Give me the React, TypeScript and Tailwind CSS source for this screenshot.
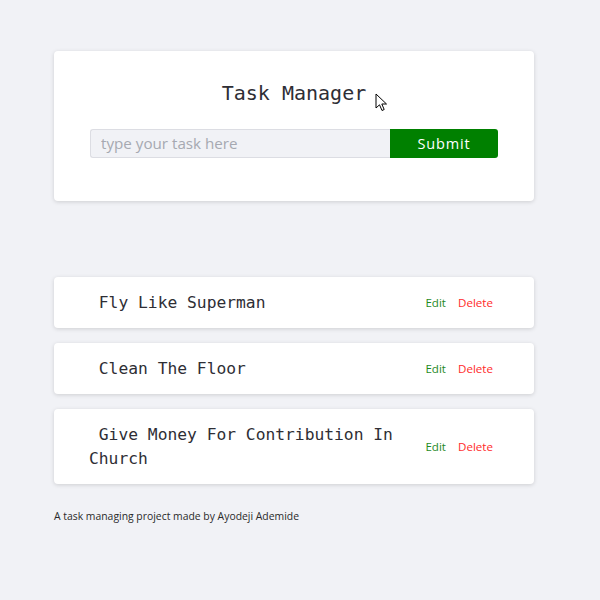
import { useState } from "react"

type Task = { id: number; title: string }

const MONO = "font-['DejaVu_Sans_Mono',monospace]"
const SANS = "font-['Open_Sans',sans-serif]"

function Cursor() {
  return (
    <svg
      className="pointer-events-none absolute left-[375px] top-[93px]"
      width="13"
      height="19"
      viewBox="0 0 13 19"
    >
      <path
        d="M1 1 L1 15 L4.5 11.8 L7 17.5 L9.2 16.5 L6.8 11 L11.5 11 Z"
        fill="#fff"
        stroke="#000"
        strokeWidth="1"
        strokeLinejoin="round"
      />
    </svg>
  )
}

function TaskRow({ task }: { task: Task }) {
  return (
    <div className="flex items-center rounded-[4px] bg-white py-[13.5px] pl-[35px] pr-[41px] shadow-[0_1px_4px_rgba(0,0,0,0.15)]">
      <span
        className={`${MONO} w-[320px] whitespace-pre-wrap text-[16.3px] leading-[24px] text-[#2e2e35]`}
      >
        {" " + task.title}
      </span>
      <div className={`${SANS} ml-auto flex items-center gap-[12px] text-[11.6px]`}>
        <button className="text-[#1f8a1f]">Edit</button>
        <button className="text-[#ff2a2a]">Delete</button>
      </div>
    </div>
  )
}

export default function App() {
  const [tasks] = useState<Task[]>([
    { id: 1, title: "Fly Like Superman" },
    { id: 2, title: "Clean The Floor" },
    { id: 3, title: "Give Money For Contribution In Church" },
  ])
  const [value, setValue] = useState("")

  return (
    <div className="relative min-h-[600px] bg-[#f1f2f6] px-[54px] pt-[51px]">
      <div className="flex w-[480px] flex-col items-center rounded-[4px] bg-white pb-[43px] pt-[28px] shadow-[0_1px_4px_rgba(0,0,0,0.15)]">
        <h1 className={`${MONO} text-[20px] leading-[28px] text-[#2e2e35]`}>
          Task Manager
        </h1>
        <form className="mt-[22px] flex h-[29px]" onSubmit={(e) => e.preventDefault()}>
          <input
            value={value}
            onChange={(e) => setValue(e.target.value)}
            placeholder="type your task here"
            className={`${SANS} w-[300px] rounded-l-[3px] border border-r-0 border-[#dcdde3] bg-[#f1f2f6] px-[10px] text-[15.2px] text-[#333] outline-none placeholder:text-[#a6a9b1]`}
          />
          <button
            className={`${SANS} w-[108px] rounded-r-[3px] bg-[#008000] text-[14.5px] tracking-[0.8px] text-white`}
          >
            Submit
          </button>
        </form>
      </div>

      <div className="mt-[76px] flex w-[480px] flex-col gap-[15px]">
        {tasks.map((t) => (
          <TaskRow key={t.id} task={t} />
        ))}
      </div>

      <p className={`${SANS} mt-[25px] text-[10.4px] font-medium text-[#2a2a2a]`}>
        A task managing project made by Ayodeji Ademide
      </p>

      <Cursor />
    </div>
  )
}
